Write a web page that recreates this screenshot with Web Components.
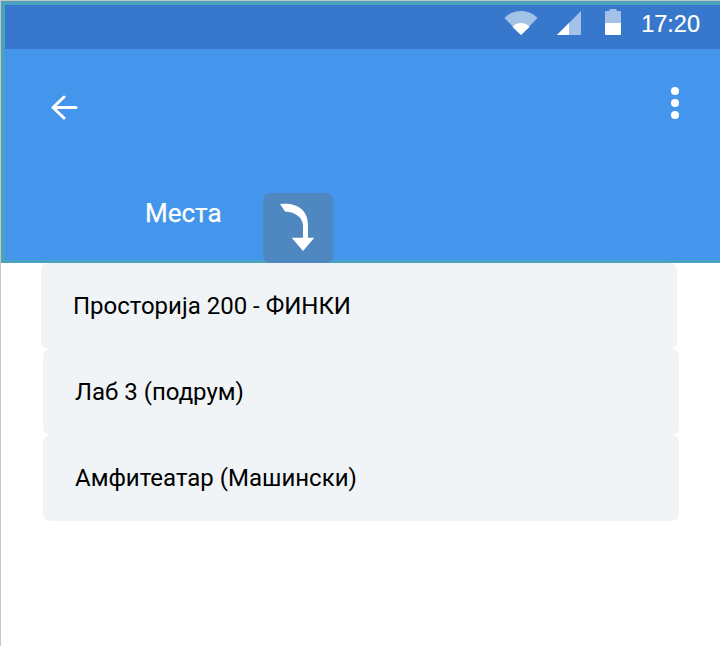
<!DOCTYPE html>
<html>
<head>
<meta charset="utf-8">
<title>Места</title>
<style>
  html, body { margin: 0; padding: 0; }
  body {
    box-sizing: border-box;
    height: 646px;
    overflow: hidden;
    background: #fff;
    border-top: 1px solid #c6c6c6;
    border-left: 1px solid #c6c6c6;
    font-family: Roboto, "Liberation Sans", sans-serif;
  }
</style>
</head>
<body>
<app-header title="Места"></app-header>
<place-list>
  <place-card style="margin-left:40px">Просторија 200 - ФИНКИ</place-card>
  <place-card>Лаб 3 (подрум)</place-card>
  <place-card>Амфитеатар (Машински)</place-card>
</place-list>

<script>
class StatusBar extends HTMLElement {
  constructor(){
    super();
    this.attachShadow({mode: 'open'});
    this.shadowRoot.innerHTML = `
      <style>
        :host {
          display: flex;
          align-items: flex-start;
          justify-content: flex-end;
          height: 44px;
          background: #3777cc;
          color: #fff;
          padding-right: 20px;
        }
        svg { display: block; flex: none; }
        .wifi { margin: 5px 18px 0 0; }
        .signal { margin: 6px 24px 0 0; }
        .battery { margin: 4px 20px 0 0; }
        span {
          margin-top: 6px;
          font: 400 23.5px "Liberation Sans", Arial, sans-serif;
          -webkit-text-stroke: 0.2px #fff;
        }
      </style>
      <svg class="wifi" width="35" height="26" viewBox="0 0 35 26">
        <path d="M0.5 8 C5 3.5 11 1 17 1 C23 1 29.5 3.5 33.5 8 L17 25 Z" fill="#a4c2e8"/>
        <path d="M8.5 17 C10.5 14.5 13.5 13 17 13 C20.5 13 23.5 14.5 25.5 17 L17 25 Z" fill="#fff"/>
      </svg>
      <svg class="signal" width="24" height="24" viewBox="0 0 24 24">
        <path d="M0 24 L24 0 V24 Z" fill="#a4c2e8"/>
        <path d="M0 24 L12 12 V24 Z" fill="#fff"/>
      </svg>
      <svg class="battery" width="16" height="26" viewBox="0 0 16 26">
        <path d="M4.5 0 H11.5 V2 H15 Q16 2 16 3 V14 H0 V3 Q0 2 1 2 H4.5 Z" fill="#a4c2e8"/>
        <path d="M0 14 H16 V25 Q16 26 15 26 H1 Q0 26 0 25 Z" fill="#fff"/>
      </svg>
      <span>17:20</span>
    `;
  }
}

class AppToolbar extends HTMLElement {
  constructor(){
    super();
    this.attachShadow({mode: 'open'});
    this.shadowRoot.innerHTML = `
      <style>
        :host {
          display: flex;
          align-items: flex-start;
          justify-content: space-between;
          box-sizing: border-box;
          height: 144px;
          padding: 37px 40px 0 45px;
        }
        svg { display: block; }
        .back { margin-top: 9px; }
      </style>
      <svg class="back" width="28" height="26" viewBox="0 0 28 26">
        <path d="M26 12.5 H3 M14 2 L3 12.5 L14 23" fill="none" stroke="#fff" stroke-width="3" stroke-linecap="round" stroke-linejoin="round"/>
      </svg>
      <svg width="10" height="34" viewBox="0 0 10 34">
        <circle cx="5" cy="5" r="4" fill="#fff"/>
        <circle cx="5" cy="17" r="4" fill="#fff"/>
        <circle cx="5" cy="29" r="4" fill="#fff"/>
      </svg>
    `;
  }
}

class SortTab extends HTMLElement {
  constructor(){
    super();
    this.attachShadow({mode: 'open'});
    this.shadowRoot.innerHTML = `
      <style>
        :host {
          display: flex;
          align-items: flex-end;
          height: 67px;
          padding-left: 140px;
          color: #fff;
        }
        .label {
          font: 400 26px Roboto, "Liberation Sans", sans-serif;
          -webkit-text-stroke: 0.25px #fff;
          width: 118px;
          align-self: flex-start;
          line-height: 28px;
          padding-top: 6px;
        }
        .btn {
          width: 70px;
          height: 70px;
          margin-bottom: -3px;
          border-radius: 7px;
          background: #4f88c0;
          flex: none;
        }
        svg { display: block; }
      </style>
      <div class="label"><slot></slot></div>
      <div class="btn">
        <svg width="70" height="70" viewBox="0 0 70 70">
          <path d="M17 11 C34 9 45 17 45 32 V45 H40 V33 C40 25 33 19 22 18.5 Z" fill="#fff"/>
          <path d="M28.7 44.7 H51.3 L40 58 Z" fill="#fff"/>
        </svg>
      </div>
    `;
  }
}

class AppHeader extends HTMLElement {
  constructor(){
    super();
    this.attachShadow({mode: 'open'});
    this.shadowRoot.innerHTML = `
      <style>
        :host {
          display: block;
          background: #4496ec;
          border-top: 4px solid #4aa3bd;
          border-left: 4px solid #4aa3bd;
          border-bottom: 3px solid #4aa3bd;
        }
      </style>
      <status-bar></status-bar>
      <app-toolbar></app-toolbar>
      <sort-tab>${this.getAttribute('title')}</sort-tab>
    `;
  }
}

class PlaceList extends HTMLElement {
  constructor(){
    super();
    this.attachShadow({mode: 'open'});
    this.shadowRoot.innerHTML = `
      <style>
        :host {
          display: flex;
          flex-direction: column;
          align-items: flex-start;
        }
      </style>
      <slot></slot>
    `;
  }
}

class PlaceCard extends HTMLElement {
  constructor(){
    super();
    this.attachShadow({mode: 'open'});
    this.shadowRoot.innerHTML = `
      <style>
        :host {
          display: flex;
          align-items: center;
          box-sizing: border-box;
          width: 636px;
          height: 86px;
          margin-left: 42px;
          padding: 0 32px 0 32px;
          background: #f0f4f7;
          border-radius: 7px;
          color: #000;
          font: 400 24px Roboto, "Liberation Sans", sans-serif;
        }
      </style>
      <slot></slot>
    `;
  }
}

customElements.define('status-bar', StatusBar);
customElements.define('app-toolbar', AppToolbar);
customElements.define('sort-tab', SortTab);
customElements.define('app-header', AppHeader);
customElements.define('place-list', PlaceList);
customElements.define('place-card', PlaceCard);
</script>
</body>
</html>
